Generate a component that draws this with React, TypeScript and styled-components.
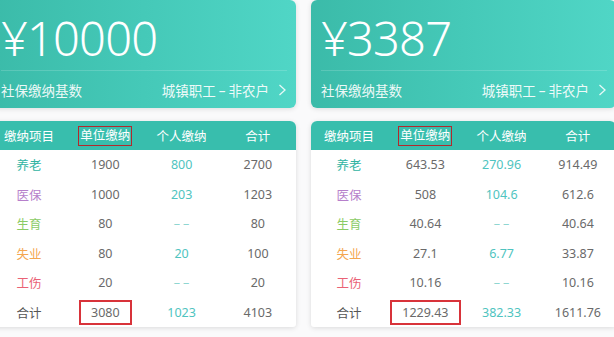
import { createGlobalStyle, styled } from "styled-components";

interface IRow {
  name: string;
  color: string;
  unit: string;
  personal: string;
  total: string;
}

interface IPanel {
  base: string;
  rows: IRow[];
  sum: { unit: string; personal: string; total: string };
}

const panels: IPanel[] = [
  {
    base: "¥10000",
    rows: [
      { name: "养老", color: "#2fb4a2", unit: "1900", personal: "800", total: "2700" },
      { name: "医保", color: "#b67fcb", unit: "1000", personal: "203", total: "1203" },
      { name: "生育", color: "#8bcb66", unit: "80", personal: "--", total: "80" },
      { name: "失业", color: "#f4a650", unit: "80", personal: "20", total: "100" },
      { name: "工伤", color: "#ea6275", unit: "20", personal: "--", total: "20" },
    ],
    sum: { unit: "3080", personal: "1023", total: "4103" },
  },
  {
    base: "¥3387",
    rows: [
      { name: "养老", color: "#2fb4a2", unit: "643.53", personal: "270.96", total: "914.49" },
      { name: "医保", color: "#b67fcb", unit: "508", personal: "104.6", total: "612.6" },
      { name: "生育", color: "#8bcb66", unit: "40.64", personal: "--", total: "40.64" },
      { name: "失业", color: "#f4a650", unit: "27.1", personal: "6.77", total: "33.87" },
      { name: "工伤", color: "#ea6275", unit: "10.16", personal: "--", total: "10.16" },
    ],
    sum: { unit: "1229.43", personal: "382.33", total: "1611.76" },
  },
];

const Chevron = () => (
  <svg width="9" height="12" viewBox="0 0 9 12" fill="none">
    <path d="M1.5 1 L7 6 L1.5 11" stroke="rgba(255,255,255,0.85)" strokeWidth="1.3" />
  </svg>
);

const Panel = ({ panel }: { panel: IPanel }) => {
  return (
    <Column>
      <BaseCard>
        <Amount>{panel.base}</Amount>
        <BaseRow>
          <span>社保缴纳基数</span>
          <BaseType>
            <span>
              城镇职工<Dash>–</Dash>非农户
            </span>
            <Chevron />
          </BaseType>
        </BaseRow>
      </BaseCard>
      <TableCard>
        <HeadRow>
          <Cell>缴纳项目</Cell>
          <Cell>
            <HeadMark>单位缴纳</HeadMark>
          </Cell>
          <Cell>个人缴纳</Cell>
          <Cell>合计</Cell>
        </HeadRow>
        {panel.rows.map((row) => (
          <BodyRow key={row.name}>
            <Cell $color={row.color}>{row.name}</Cell>
            <Cell>{row.unit}</Cell>
            {row.personal === "--" ? (
              <Cell $color="#8fd6d1">
                <Empty>––</Empty>
              </Cell>
            ) : (
              <Cell $color="#4fc4c0">{row.personal}</Cell>
            )}
            <Cell>{row.total}</Cell>
          </BodyRow>
        ))}
        <BodyRow>
          <Cell $color="#555">合计</Cell>
          <Cell>
            <SumMark>{panel.sum.unit}</SumMark>
          </Cell>
          <Cell $color="#4fc4c0">{panel.sum.personal}</Cell>
          <Cell>{panel.sum.total}</Cell>
        </BodyRow>
      </TableCard>
    </Column>
  );
};

const App = () => {
  return (
    <>
      <GlobalStyle />
      <Page>
        {panels.map((p) => (
          <Panel key={p.base} panel={p} />
        ))}
      </Page>
    </>
  );
};

export default App;

const GlobalStyle = createGlobalStyle`
  html, body {
    margin: 0;
    padding: 0;
    width: 614px;
    height: 337px;
    overflow: hidden;
    background: #fafafb;
    font-family: "Noto Sans", "Noto Sans CJK SC", sans-serif;
  }
`;

const Page = styled.div`
  display: flex;
  column-gap: 15px;
  margin-left: -9px;
  width: 640px;
`;

const Column = styled.div`
  width: 305px;
  flex-shrink: 0;
  display: flex;
  flex-direction: column;
  row-gap: 13px;
`;

const BaseCard = styled.div`
  height: 108px;
  box-sizing: border-box;
  padding: 0 9px 0 10px;
  border-radius: 6px;
  background: linear-gradient(90deg, #3bbba9 0%, #45c9b8 50%, #50d6c6 100%);
  box-shadow: 0 1px 5px rgba(0, 0, 0, 0.12);
  color: #fff;
  display: flex;
  flex-direction: column;
`;

const Amount = styled.div`
  height: 71px;
  box-sizing: border-box;
  padding-top: 14px;
  font-size: 47px;
  line-height: 48px;
  font-weight: 300;
  letter-spacing: -0.8px;
  border-bottom: 1px solid rgba(255, 255, 255, 0.16);
`;

const BaseRow = styled.div`
  flex: 1;
  display: flex;
  justify-content: space-between;
  align-items: center;
  font-size: 13.5px;
  color: rgba(255, 255, 255, 0.92);
`;

const BaseType = styled.span`
  display: flex;
  align-items: center;
  column-gap: 9px;
`;

const Dash = styled.span`
  display: inline-block;
  margin: 0 3px;
`;

const TableCard = styled.div`
  background: #fff;
  border-radius: 6px 6px 3px 3px;
  overflow: hidden;
  box-shadow: 0 1px 5px rgba(0, 0, 0, 0.13);
`;

const HeadRow = styled.div`
  display: grid;
  grid-template-columns: repeat(4, 1fr);
  height: 29px;
  align-items: center;
  background: #38bead;
  color: #fff;
  font-size: 12.5px;
`;

const BodyRow = styled.div`
  display: grid;
  grid-template-columns: repeat(4, 1fr);
  height: 29.5px;
  align-items: center;
  font-size: 12.5px;
  color: #6a6a6a;
`;

const Cell = styled.div<{ $color?: string }>`
  text-align: center;
  color: ${(p) => p.$color ?? "inherit"};
`;

const Empty = styled.span`
  letter-spacing: 3px;
  margin-right: -3px;
`;

const HeadMark = styled.span`
  display: inline-block;
  line-height: 18px;
  padding: 0 1px;
  border: 1px solid #b3282c;
`;

const SumMark = styled.span`
  display: inline-block;
  line-height: 21px;
  padding: 0 10px;
  border: 2px solid #d8333a;
`;
